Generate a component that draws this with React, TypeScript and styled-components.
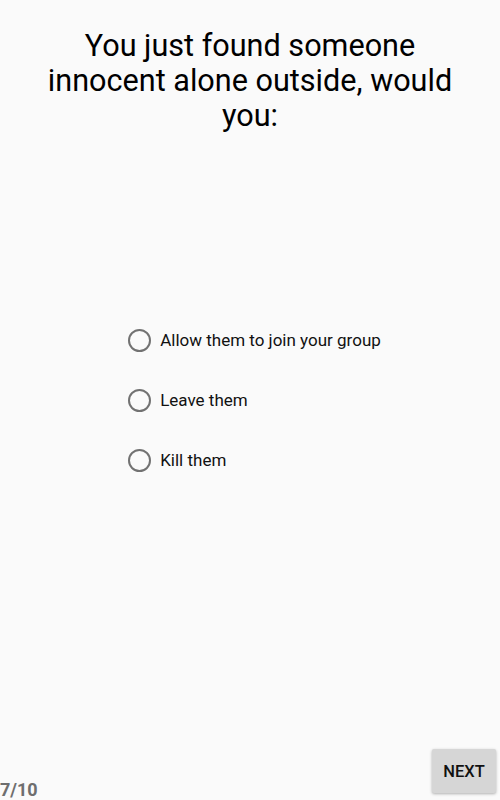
import React from "react";
import styled, { createGlobalStyle } from "styled-components";

const Global = createGlobalStyle`
  html, body { margin: 0; padding: 0; background: #fafafa; }
  body { font-family: Roboto, "Noto Sans", sans-serif; }
`;

const Page = styled.div`
  display: flex;
  flex-direction: column;
  height: 800px;
  width: 500px;
  background: #fafafa;
  box-sizing: border-box;
`;

const Title = styled.h1`
  margin: 0;
  padding: 28px 40px 0;
  font-family: Roboto, sans-serif;
  font-weight: 400;
  font-size: 30.6px;
  line-height: 35px;
  text-align: center;
  color: #000;
`;

const Options = styled.div`
  display: flex;
  flex-direction: column;
  align-self: center;
  margin-top: 177px;
  padding-left: 9px;
`;

const Row = styled.label`
  display: flex;
  align-items: center;
  height: 60px;
  gap: 9px;
  cursor: pointer;
`;

const Circle = styled.span`
  width: 23px;
  height: 23px;
  box-sizing: border-box;
  border: 2.5px solid #727272;
  border-radius: 50%;
  flex-shrink: 0;
`;

const OptionText = styled.span`
  font-size: 17px;
  color: #111;
`;

const Spacer = styled.div`
  flex: 1;
`;

const Footer = styled.div`
  display: flex;
  justify-content: space-between;
  align-items: flex-end;
`;

const Counter = styled.span`
  font-size: 18px;
  font-weight: 700;
  line-height: 20px;
  color: #6e6e6e;
`;

const NextButton = styled.button`
  margin: 0 4px 7px 0;
  width: 64px;
  height: 44px;
  border: none;
  border-radius: 2px;
  background: #d6d6d6;
  box-shadow: 0 1px 3px rgba(0, 0, 0, 0.3);
  font-family: Roboto, sans-serif;
  font-size: 16.5px;
  font-weight: 500;
  color: #111;
  padding: 0;
`;

const options = ["Allow them to join your group", "Leave them", "Kill them"];

export default function App() {
  return (
    <>
      <Global />
      <Page>
        <Title>You just found someone innocent alone outside, would you:</Title>
        <Options>
          {options.map((o) => (
            <Row key={o}>
              <Circle />
              <OptionText>{o}</OptionText>
            </Row>
          ))}
        </Options>
        <Spacer />
        <Footer>
          <Counter>7/10</Counter>
          <NextButton>NEXT</NextButton>
        </Footer>
      </Page>
    </>
  );
}
